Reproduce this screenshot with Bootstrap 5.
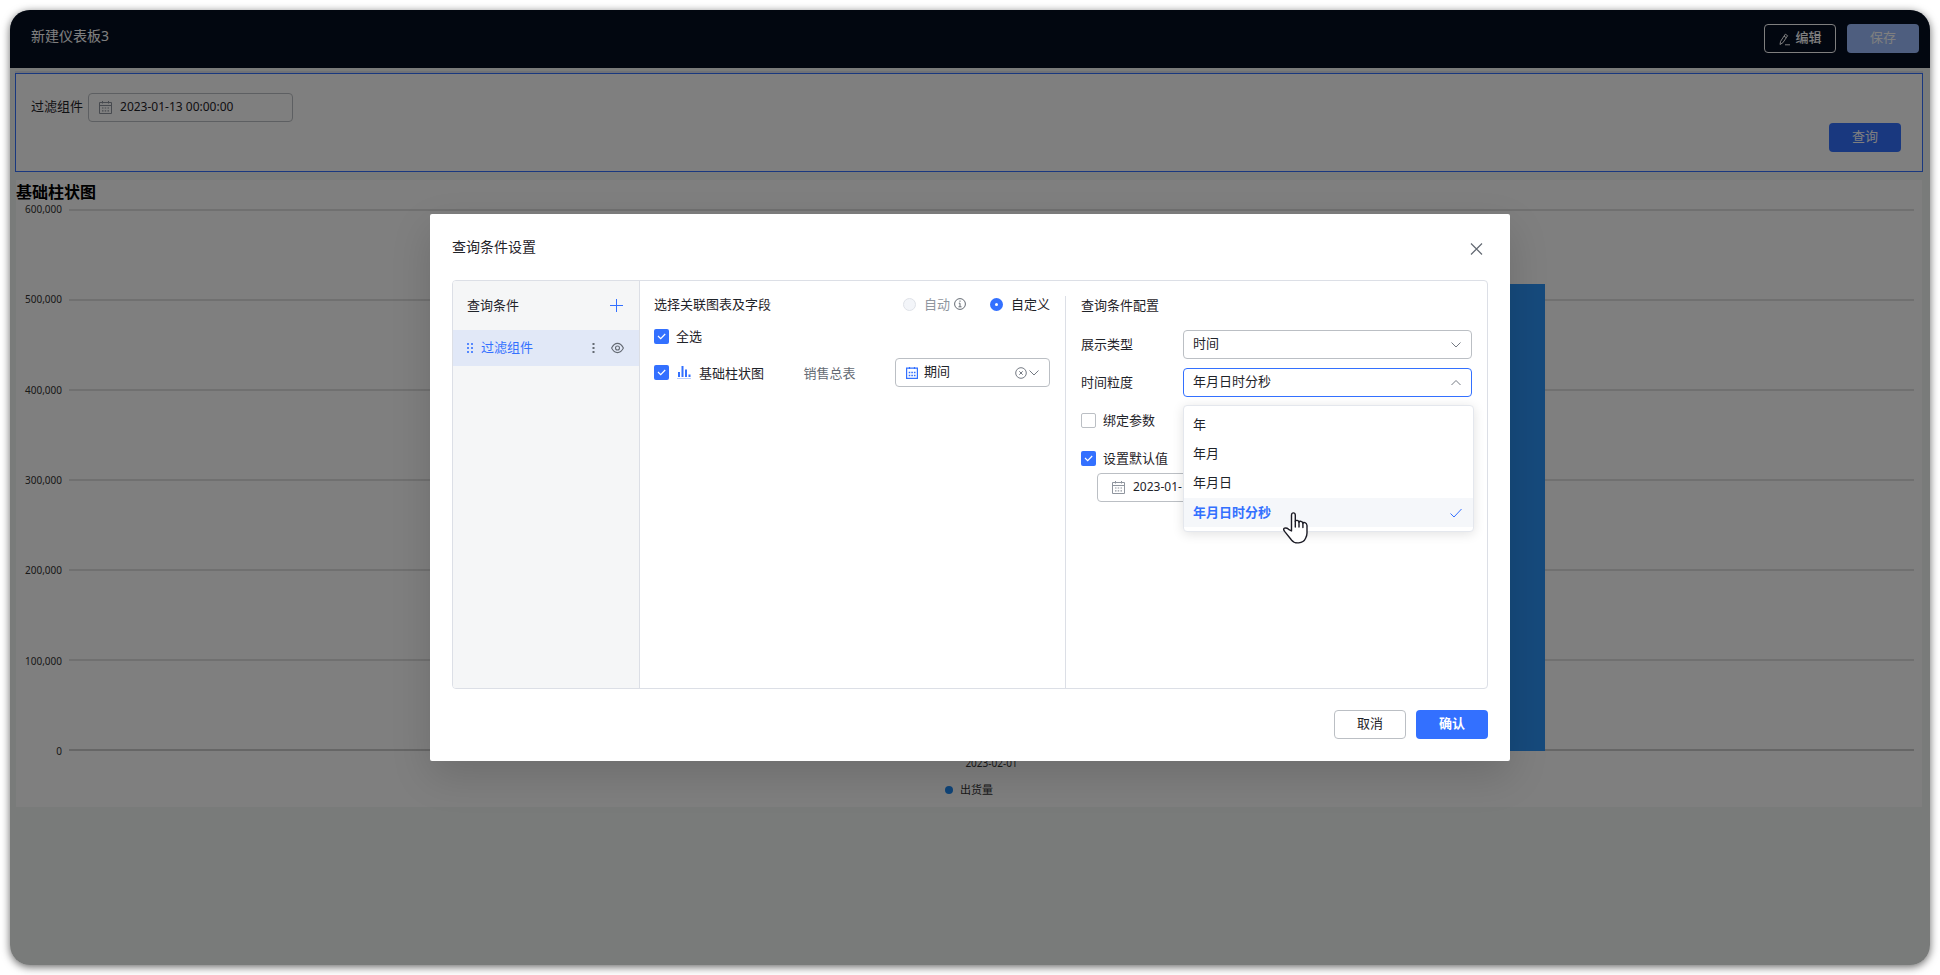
<!DOCTYPE html>
<html lang="zh-CN" class="h-100">
<head>
<meta charset="utf-8">
<meta name="viewport" content="width=device-width, initial-scale=1">
<title>新建仪表板3</title>
<link href="https://cdn.jsdelivr.net/npm/bootstrap@5.3.0/dist/css/bootstrap.min.css" rel="stylesheet">
<style>
  :root { --brand: #3370ff; --line: #dcdfe6; --ctl: #bbbfc4; --ink: #1f2329; --muted: #646a73; }
  body { font: 13px/20px "Noto Sans", "Noto Sans CJK SC", sans-serif; color: var(--ink); background: #fff; }
  .app-frame { margin: 10px; min-height: calc(100vh - 20px); border-radius: 20px; background: #f3f7f5; box-shadow: 0 2px 9px rgba(0,0,0,.6); }
  .topbar { height: 58px; padding: 0 11px 2px 21px; background: #050e21; color: #fff; border-radius: 20px 20px 0 0; }
  .topbar h1 { font-size: 14px; line-height: 20px; font-weight: 400; margin: 0 0 4px; }
  .topbar-tools { gap: 11px; }
  .tool-btn { width: 72px; height: 29px; padding: 0 0 3px; font-size: 13px; line-height: 20px; border-radius: 4px; }
  .btn-brand { background: var(--brand); color: #fff; border: 0; }
  .btn-brand:hover { background: #2a5fdb; color: #fff; }
  .btn-brand:disabled { background: #9cbdff; color: #fff; opacity: 1; }
  .btn-line { background: #fff; border: 1px solid var(--ctl); color: var(--ink); }
  .btn-edit { border: 1px solid #fff; color: #fff; font-weight: 500; padding-bottom: 2px; }
  .filter-panel { margin: 5px 7px 0 5px; height: 99px; padding: 19px 21px 19px 15px; border: 1px solid var(--brand); background: #fff; box-shadow: 0 -2px 0 #dfe3ec; }
  .filter-field { gap: 5px; }
  .filter-field label { padding-top: 3px; }
  .date-box { height: 29px; border: 1px solid var(--ctl); border-radius: 4px; padding: 0 10px; gap: 8px; background: #fff; }
  .date-box input { border: 0; outline: 0; padding: 0 0 2px; background: none; font-size: 12px; line-height: 18px; color: var(--ink); min-width: 0; width: 100%; }
  .date-box svg { flex: none; }
  .filter-panel .date-box { width: 205px; }
  .chart-panel { margin: 8px 8px 0 6px; background: #fff; height: 627px; }
  .chart-panel h2 { font-size: 16px; line-height: 24px; font-weight: 700; color: #000; margin: 0; }
  .plot { height: 542px; margin: 5px 8px 0 0; }
  .tick { flex: 1 1 0; }
  .tick span { display: block; height: 0; line-height: 0; }
  .axis { width: 53px; padding-right: 7px; text-align: right; font-size: 10px; color: #333; }
  .axis .tick:last-child, .rules .tick:last-child { flex: none; height: 0; }
  .rules .tick { border-top: 2px solid #e0e0e0; }
  .rules .tick:last-child { border-color: #ccc; }
  .bar-fill { bottom: 0; left: 20%; right: 20%; background: #2c95f9; }
  .x-label { padding: 3px 0 0 53px; margin-right: 8px; font-size: 10px; line-height: 18px; height: 30px; color: #333; }
  .legend-row { font-size: 11px; line-height: 18px; color: #333; gap: 7px; }
  .legend-dot { width: 8px; height: 8px; border-radius: 50%; background: #1e88f0; }
  .scrim { background: rgba(0,0,0,.5); border-radius: 20px; z-index: 10; padding: 204px 20px 20px; }
  .dialog { max-width: 1080px; background: #fff; border-radius: 2px; padding: 22px 22px; box-shadow: 0 15px 40px rgba(0,0,0,.14); }
  .dialog h2 { font-size: 14px; line-height: 22px; font-weight: 400; margin: 0; }
  .dialog h3 { font-size: 13px; line-height: 20px; font-weight: 400; margin: 0; }
  .icon-btn { border: 0; background: none; padding: 0; display: flex; color: var(--muted); }
  .panes { margin-top: 22px; min-height: 409px; border: 1px solid var(--line); border-radius: 4px; }
  .pane-side { width: 187px; background: #f5f6f7; border-right: 1px solid var(--line); border-radius: 3px 0 0 3px; }
  .side-head { height: 49px; padding: 0 16px 0 14px; }
  .side-head h3, .side-item span { padding-bottom: 2px; }
  .side-item { height: 36px; padding: 0 15px 0 14px; background: #e1e8f7; color: var(--brand); }
  .pane-mid { width: 425px; padding: 13px 15px 0 14px; }
  .mid-row { margin-top: 12px; gap: 7px; }
  .pane-cfg { margin-top: 15px; border-left: 1px solid var(--line); padding: 0 15px; }
  .cfg-rows { margin-top: 15px; gap: 9px; }
  .pane-cfg h3 { margin-top: -1px; }
  .cfg-row { height: 29px; gap: 7px; }
  .cfg-row label { padding-bottom: 1px; }
  .box { appearance: none; width: 15px; height: 15px; margin: 0; flex: none; border: 1px solid var(--ctl); border-radius: 2px; background: #fff center/15px no-repeat; }
  .box:checked { border: 0; background-color: var(--brand); background-image: url("data:image/svg+xml,%3Csvg xmlns='http://www.w3.org/2000/svg' viewBox='0 0 15 15'%3E%3Cpath d='M4 7l2.700 2.700L11.200 5' fill='none' stroke='%23fff' stroke-width='1.200'/%3E%3C/svg%3E"); }
  .dot { appearance: none; width: 13px; height: 13px; margin: 0; border: 1px solid #dfe2e8; border-radius: 50%; background: #f3f5f9; flex: none; }
  .dot:checked { border: 5px solid var(--brand); background: #fff; }
  .pick { height: 29px; font-size: 13px; line-height: 20px; padding: 2px 30px 5px 9px; border: 1px solid var(--ctl); border-radius: 4px; color: var(--ink); background: #fff url("data:image/svg+xml,%3Csvg xmlns='http://www.w3.org/2000/svg' viewBox='0 0 10 10'%3E%3Cpath d='M.500 2.500L5 7l4.500-4.500' fill='none' stroke='%23747a83'/%3E%3C/svg%3E") right 10px center/10px 10px no-repeat; }
  .pick.is-open { border-color: var(--brand); box-shadow: none; background-image: url("data:image/svg+xml,%3Csvg xmlns='http://www.w3.org/2000/svg' viewBox='0 0 10 10'%3E%3Cpath d='M.500 7L5 2.500 9.500 7' fill='none' stroke='%23747a83'/%3E%3C/svg%3E"); }
  .field-pick { width: 155px; }
  .field-pick .pick { padding-left: 28px; }
  .lead-icon { left: 11px; top: 9px; }
  .clear-icon { right: 23px; top: 9px; }
  .cfg-label { width: 95px; flex: none; }
  .options { left: 102px; right: -2px; top: 37px; z-index: 5; padding: 5px 0 4px; margin: 0; border: 1px solid #e4e7ed; border-radius: 4px; background: #fff; box-shadow: 0 2px 12px rgba(0,0,0,.12); list-style: none; }
  .options li { height: 29px; line-height: 26px; padding: 0 11px 0 9px; }
  .options .picked { background: #f5f7fa; color: var(--brand); font-weight: 700; }
  .options .picked span { padding-bottom: 2px; }
  .hand { left: 202px; top: 144px; z-index: 6; }
  .dialog-foot { margin-top: 21px; gap: 10px; }
</style>
</head>
<body>
<svg width="0" height="0" class="position-absolute">
  <symbol id="cal" viewBox="0 0 13 13"><g fill="none" stroke="currentColor"><path d="M.5 1.500h12v11H.5zM.5 4.500h12M3.500 0v2.500M9.500 0v2.500"/><path d="M3 7h1.500M5.700 7h1.500M8.500 7H10M3 9.800h1.500M5.700 9.800h1.500M8.500 9.800H10" stroke-width="1.200"/></g></symbol>
</svg>
<div class="app-frame position-relative">
  <header class="topbar d-flex align-items-center">
    <h1>新建仪表板3</h1>
    <div class="topbar-tools d-flex ms-auto">
      <button class="btn tool-btn btn-edit d-flex align-items-center justify-content-center" type="button">
        <svg class="me-1 mt-1" width="13" height="13" viewBox="0 0 13 13" fill="none" stroke="currentColor"><path d="M2 11.500l.6-3.200L7.300 1.200l2.300 1.500-4.700 7zM6 3.200l2.300 1.500M7 11.800h5"/></svg>编辑
      </button>
      <button class="btn tool-btn btn-brand" type="button" disabled>保存</button>
    </div>
  </header>

  <main>
    <section class="filter-panel d-flex justify-content-between">
      <div class="filter-field d-flex align-items-start">
        <label for="filterDate">过滤组件</label>
        <div class="date-box d-flex align-items-center"><svg width="13" height="13" color="#8f959e"><use href="#cal"/></svg><input id="filterDate" type="text" value="2023-01-13 00:00:00"></div>
      </div>
      <button class="btn tool-btn btn-brand align-self-end" type="button">查询</button>
    </section>

    <section class="chart-panel">
      <h2>基础柱状图</h2>
      <div class="plot d-flex">
        <div class="axis d-flex flex-column">
          <div class="tick"><span>600,000</span></div><div class="tick"><span>500,000</span></div><div class="tick"><span>400,000</span></div><div class="tick"><span>300,000</span></div><div class="tick"><span>200,000</span></div><div class="tick"><span>100,000</span></div><div class="tick"><span>0</span></div>
        </div>
        <div class="rules d-flex flex-column flex-grow-1 position-relative">
          <div class="bar-fill position-absolute" style="height:86.2%"></div>
          <div class="tick"></div><div class="tick"></div><div class="tick"></div><div class="tick"></div><div class="tick"></div><div class="tick"></div><div class="tick"></div>
        </div>
      </div>
      <div class="x-label text-center">2023-02-01</div>
      <div class="legend-row d-flex align-items-center justify-content-center"><span class="legend-dot"></span>出货量</div>
    </section>
  </main>

  <div class="scrim position-absolute top-0 start-0 w-100 h-100">
    <div class="dialog mx-auto" role="dialog" aria-labelledby="dlgTitle">
      <div class="d-flex align-items-center justify-content-between">
        <h2 id="dlgTitle">查询条件设置</h2>
        <button class="icon-btn mt-1 me-1" type="button" aria-label="关闭"><svg width="15" height="12" viewBox="0 0 15 12" stroke="currentColor" stroke-width="1.200"><path d="M2 .5l11 11M13 .5L2 11.500"/></svg></button>
      </div>

      <div class="panes d-flex">
        <aside class="pane-side flex-shrink-0">
          <div class="side-head d-flex align-items-center justify-content-between">
            <h3>查询条件</h3>
            <button class="icon-btn" type="button" aria-label="添加"><svg width="13" height="13" viewBox="0 0 13 13" stroke="#3370ff"><path d="M6.500 0v13M0 6.500h13"/></svg></button>
          </div>
          <div class="side-item d-flex align-items-center">
            <svg class="me-2" width="6" height="10" viewBox="0 0 6 10" fill="currentColor" fill-opacity=".8"><path d="M0 0h2v2H0zM4 0h2v2H4zM0 4h2v2H0zM4 4h2v2H4zM0 8h2v2H0zM4 8h2v2H4z"/></svg>
            <span class="me-auto">过滤组件</span>
            <button class="icon-btn" type="button" aria-label="更多"><svg width="3" height="12" viewBox="0 0 3 12" fill="currentColor"><path d="M.5 1h2v2h-2zM.5 5h2v2h-2zM.5 9h2v2h-2z"/></svg></button>
            <button class="icon-btn ms-3" type="button" aria-label="显示"><svg width="13" height="12" viewBox="0 0 13 12" fill="none" stroke="currentColor" stroke-width="1.100"><path d="M.6 6Q3 1.400 6.500 1.400T12.400 6Q10 10.600 6.500 10.600T.6 6z"/><circle cx="6.500" cy="6" r="2"/></svg></button>
          </div>
        </aside>

        <section class="pane-mid flex-shrink-0">
          <div class="d-flex align-items-center">
            <h3 class="me-auto">选择关联图表及字段</h3>
            <input class="dot" type="radio" name="mode" id="modeAuto" disabled>
            <label for="modeAuto" class="ms-2 me-1" style="color:#8f959e">自动</label>
            <svg width="12" height="12" viewBox="0 0 12 12" fill="none" stroke="#646a73"><circle cx="6" cy="6" r="5.400"/><path d="M6 2.500v1.300M4.800 5.200H6v3.500M4.500 8.800h3"/></svg>
            <input class="dot ms-4 me-2" type="radio" name="mode" id="modeCustom" checked>
            <label for="modeCustom">自定义</label>
          </div>
          <div class="mid-row d-flex align-items-center">
            <input class="box" type="checkbox" id="all" checked><label for="all">全选</label>
          </div>
          <div class="mid-row d-flex align-items-center">
            <input class="box" type="checkbox" id="c1" checked>
            <svg width="16" height="13" viewBox="0 0 16 13" fill="#3370ff"><path d="M2 6h2v5H2zM5.500 0h2v11h-2zM9 3.500h2V11H9zM12.500 8.500h2V11h-2z"/><path d="M1 12h14v1H1z" opacity=".35"/></svg>
            <label for="c1">基础柱状图</label>
            <span class="ms-auto me-auto" style="color:#646a73">销售总表</span>
            <div class="field-pick position-relative">
              <svg class="lead-icon position-absolute" width="12" height="12" viewBox="0 0 12 12" fill="none" stroke="#3370ff"><path d="M.6 1.100h10.800v10.300H.6zM3.500 0v2M8.500 0v2" stroke-width="1.200"/><path d="M2.700 5.500h7M2.700 8.500h7" stroke-width="1.600" stroke-dasharray="1.600 1"/></svg>
              <select class="form-select pick" aria-label="字段"><option>期间</option></select>
              <svg class="clear-icon position-absolute" width="12" height="12" viewBox="0 0 12 12" fill="none" stroke="#747a83"><circle cx="6" cy="6" r="5.300"/><path d="M4.300 4.300l3.400 3.400M7.700 4.300L4.300 7.700"/></svg>
            </div>
          </div>
        </section>

        <section class="pane-cfg flex-grow-1">
          <h3>查询条件配置</h3>
          <div class="cfg-rows d-flex flex-column">
            <div class="cfg-row d-flex align-items-center">
              <label class="cfg-label" for="kind">展示类型</label>
              <select class="form-select pick" id="kind"><option>时间</option></select>
            </div>
            <div class="cfg-row d-flex align-items-center position-relative">
              <label class="cfg-label" for="gran">时间粒度</label>
              <select class="form-select pick is-open" id="gran"><option>年月日时分秒</option><option>年</option><option>年月</option><option>年月日</option></select>
              <ul class="options position-absolute" role="listbox" aria-label="时间粒度">
                <li role="option">年</li><li role="option">年月</li><li role="option">年月日</li>
                <li role="option" class="picked d-flex align-items-center justify-content-between" aria-selected="true"><span>年月日时分秒</span><svg width="12" height="10" viewBox="0 0 12 10" fill="none" stroke="currentColor"><path d="M.5 5.500L4 9l7.500-8"/></svg></li>
              </ul>
              <svg class="hand position-absolute" width="25" height="32" viewBox="0 0 25 32" fill="#fff" stroke="#1b1b25" stroke-width="1.400" stroke-linejoin="round" stroke-linecap="round"><path d="M8.500 19V3Q8.700.9 10.400.9T12.300 3V9.300Q12.600 8.100 14.200 8.400T16 10.200Q16.400 9 18 9.400T19.900 11.200Q20.300 10.200 22 10.700T24 13.500V21Q24 23.500 22.600 26.300 20.800 30.500 15.600 30.900 10.800 31.200 8.300 27.800L1.600 19.400Q-.2 16.900 1.500 16.200 3.600 15.500 5.600 17.300z"/><path d="M12.300 9.300V15M16 10.200V15M19.900 11.200V15.500" fill="none"/></svg>
            </div>
            <div class="cfg-row d-flex align-items-center">
              <input class="box" type="checkbox" id="bind"><label for="bind">绑定参数</label>
            </div>
            <div>
              <div class="cfg-row d-flex align-items-center">
                <input class="box" type="checkbox" id="def" checked><label for="def">设置默认值</label>
              </div>
              <div class="date-box d-flex align-items-center ms-3 me-5"><svg class="ms-1" width="13" height="13" color="#8f959e"><use href="#cal"/></svg><input type="text" aria-label="默认值" value="2023-01-13 00:00:00"></div>
            </div>
          </div>
        </section>
      </div>

      <div class="dialog-foot d-flex justify-content-end">
        <button class="btn tool-btn btn-line" type="button">取消</button>
        <button class="btn tool-btn btn-brand fw-semibold" type="button">确认</button>
      </div>
    </div>
  </div>
</div>
<script src="https://cdn.jsdelivr.net/npm/bootstrap@5.3.0/dist/js/bootstrap.bundle.min.js"></script>
</body>
</html>
